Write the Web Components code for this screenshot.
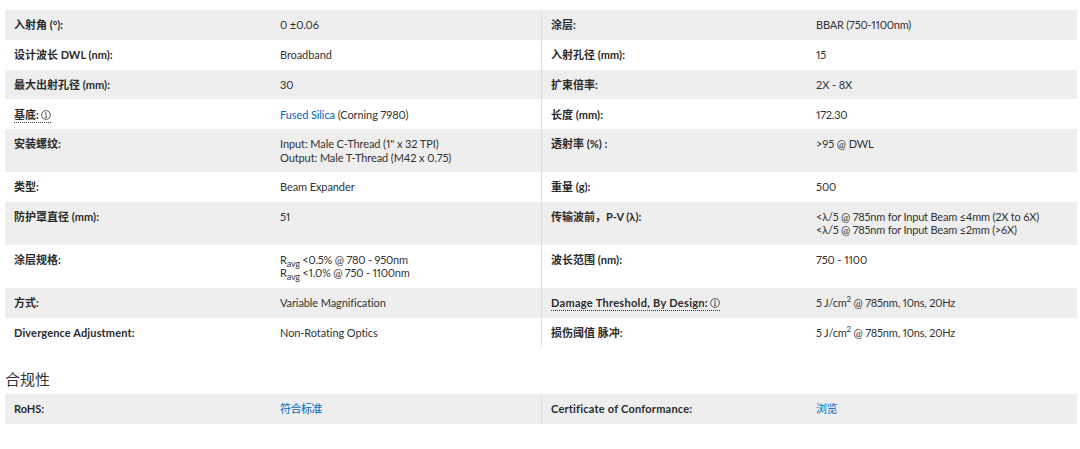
<!DOCTYPE html>
<html lang="zh">
<head>
<meta charset="utf-8">
<title>规格</title>
<style>
    html, body { margin: 0; background: #fff; }
    body {
        color: #333;
        font-family: Lato, "Noto Sans CJK SC", sans-serif;
        font-size: 11px;
        font-variant-numeric: proportional-nums;
    }
    sub { font-size: 9px; line-height: 0; }
    sup { font-size: 8px; line-height: 0; }
    span[slot] { letter-spacing: -.09px; }
    span.num { letter-spacing: -.2px; }
    span.cjk { letter-spacing: -.5px; }
</style>
</head>
<body>
<spec-page>
    <spec-table>
        <spec-row>
            <spec-label slot="l1">入射角 (°):</spec-label><span slot="v1">0 ±0.06</span>
            <spec-label slot="l2">涂层:</spec-label><span slot="v2" class="num">BBAR (750-1100nm)</span>
        </spec-row>
        <spec-row>
            <spec-label slot="l1">设计波长 DWL (nm):</spec-label><span slot="v1">Broadband</span>
            <spec-label slot="l2">入射孔径 (mm):</spec-label><span slot="v2">15</span>
        </spec-row>
        <spec-row>
            <spec-label slot="l1">最大出射孔径 (mm):</spec-label><span slot="v1">30</span>
            <spec-label slot="l2">扩束倍率:</spec-label><span slot="v2">2X - 8X</span>
        </spec-row>
        <spec-row>
            <spec-label slot="l1" tip>基底:</spec-label><span slot="v1"><spec-link>Fused Silica</spec-link> (Corning 7980)</span>
            <spec-label slot="l2">长度 (mm):</spec-label><span slot="v2" class="num">172.30</span>
        </spec-row>
        <spec-row>
            <spec-label slot="l1">安装螺纹:</spec-label><span slot="v1">Input: Male C-Thread (1" x 32 TPI)<br>Output: Male T-Thread (M42 x 0.75)</span>
            <spec-label slot="l2">透射率 (%) :</spec-label><span slot="v2">&gt;95 @ DWL</span>
        </spec-row>
        <spec-row>
            <spec-label slot="l1">类型:</spec-label><span slot="v1">Beam Expander</span>
            <spec-label slot="l2">重量 (g):</spec-label><span slot="v2">500</span>
        </spec-row>
        <spec-row>
            <spec-label slot="l1">防护罩直径 (mm):</spec-label><span slot="v1">51</span>
            <spec-label slot="l2">传输波前，P-V (λ):</spec-label><span slot="v2" class="num">&lt;λ/5 @ 785nm for Input Beam ≤4mm (2X to 6X)<br>&lt;λ/5 @ 785nm for Input Beam ≤2mm (&gt;6X)</span>
        </spec-row>
        <spec-row>
            <spec-label slot="l1">涂层规格:</spec-label><span slot="v1" class="num">R<sub>avg</sub> &lt;0.5% @ 780 - 950nm<br>R<sub>avg</sub> &lt;1.0% @ 750 - 1100nm</span>
            <spec-label slot="l2">波长范围 (nm):</spec-label><span slot="v2">750 - 1100</span>
        </spec-row>
        <spec-row>
            <spec-label slot="l1">方式:</spec-label><span slot="v1">Variable Magnification</span>
            <spec-label slot="l2" tip spacing=".3px">Damage Threshold, By Design:</spec-label><span slot="v2" class="num">5 J/cm<sup>2</sup> @ 785nm, 10ns, 20Hz</span>
        </spec-row>
        <spec-row>
            <spec-label slot="l1" spacing=".14px">Divergence Adjustment:</spec-label><span slot="v1">Non-Rotating Optics</span>
            <spec-label slot="l2">损伤阈值 脉冲:</spec-label><span slot="v2" class="num">5 J/cm<sup>2</sup> @ 785nm, 10ns, 20Hz</span>
        </spec-row>
    </spec-table>
    <spec-heading>合规性</spec-heading>
    <spec-table>
        <spec-row>
            <spec-label slot="l1">RoHS:</spec-label><span slot="v1" class="cjk"><spec-link>符合标准</spec-link></span>
            <spec-label slot="l2" spacing=".22px">Certificate of Conformance:</spec-label><span slot="v2" class="cjk"><spec-link>浏览</spec-link></span>
        </spec-row>
    </spec-table>
</spec-page>

<script>
//page wrapper
class SpecPage extends HTMLElement {
    constructor() {
        super();
        this.attachShadow({mode: "open"});
        this.shadowRoot.innerHTML = `
            <style>
                :host { display: block; padding: 10px 3px 25px 5px; }
            </style>
            <slot></slot>
        `;
    }
}

//table, even rows stay white
class SpecTable extends HTMLElement {
    constructor() {
        super();
        this.attachShadow({mode: "open"});
        this.shadowRoot.innerHTML = `
            <style>
                :host { display: block; }
            </style>
            <slot></slot>
        `;
    }
    connectedCallback() {
        [...this.children].forEach((row, i) => {
            row.style.setProperty('--row-bg', i % 2 ? '#fff' : '#eee');
        });
    }
}

//one row, two label/value pairs
class SpecRow extends HTMLElement {
    constructor() {
        super();
        this.attachShadow({mode: "open"});
        this.shadowRoot.innerHTML = `
            <style>
                :host {
                    display: grid;
                    grid-template-columns: 266px 270px 266px 1fr;
                    background: var(--row-bg, #eee);
                    line-height: 13.25px;
                }
                .cell { padding: 8.25px 9px; }
                .pair-start { border-left: 1px solid #ddd; }
            </style>
            <div class="cell"><slot name="l1"></slot></div>
            <div class="cell"><slot name="v1"></slot></div>
            <div class="cell pair-start"><slot name="l2"></slot></div>
            <div class="cell"><slot name="v2"></slot></div>
        `;
    }
}

//bold label, tip attribute adds dotted underline and info icon
class SpecLabel extends HTMLElement {
    constructor() {
        super();
        this.attachShadow({mode: "open"});
    }
    connectedCallback() {
        let tip = this.hasAttribute('tip');
        let spacing = this.getAttribute('spacing') || '0';
        this.shadowRoot.innerHTML = `
            <style>
                :host { display: inline; font-weight: 700; color: #2b2b2b; letter-spacing: ${spacing}; }
                .tip { border-bottom: 1px dotted #333; padding-bottom: 1px; }
                svg { vertical-align: -1px; margin-left: -1px; }
            </style>
            <span class="${tip ? 'tip' : ''}"><slot></slot>${tip ? `
                <svg width="10" height="10" viewBox="0 0 10 10" fill="none" stroke="#333" stroke-width=".8">
                    <circle cx="5" cy="5" r="4.4"></circle>
                    <path d="M4.2 2.6H5V7.4M4 7.4H6"></path>
                </svg>` : ''}</span>
        `;
    }
}

class SpecLink extends HTMLElement {
    constructor() {
        super();
        this.attachShadow({mode: "open"});
        this.shadowRoot.innerHTML = `
            <style>
                :host { display: inline; color: #0068c0; }
            </style>
            <slot></slot>
        `;
    }
}

class SpecHeading extends HTMLElement {
    constructor() {
        super();
        this.attachShadow({mode: "open"});
        this.shadowRoot.innerHTML = `
            <style>
                :host {
                    display: block;
                    font-size: 15px;
                    line-height: 20px;
                    padding: 22px 0 4.75px 0;
                }
            </style>
            <slot></slot>
        `;
    }
}

customElements.define('spec-page', SpecPage);
customElements.define('spec-table', SpecTable);
customElements.define('spec-row', SpecRow);
customElements.define('spec-label', SpecLabel);
customElements.define('spec-link', SpecLink);
customElements.define('spec-heading', SpecHeading);
</script>
</body>
</html>
